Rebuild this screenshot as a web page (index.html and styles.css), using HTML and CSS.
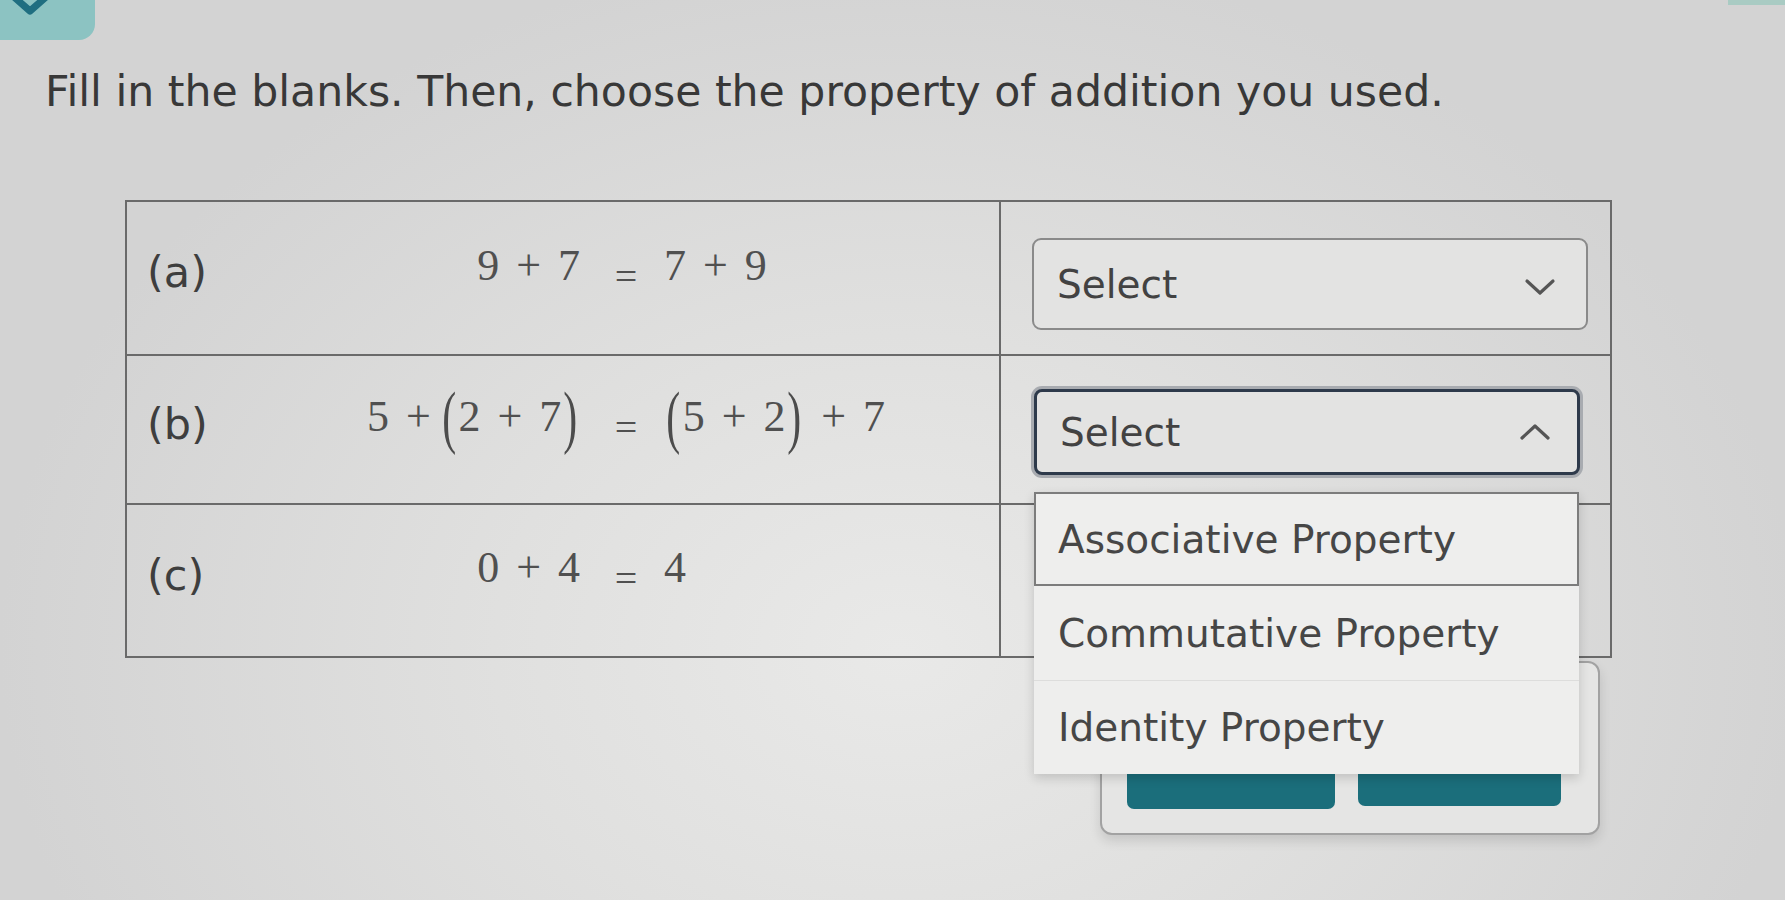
FILE: index.html
```html
<!DOCTYPE html>
<html lang="en">
<head>
<meta charset="utf-8">
<title>Properties of addition</title>
<link rel="stylesheet" href="styles.css">
</head>
<body>
<div class="page">
  <div class="topbar">
    <div class="tab">
      <svg class="tab-chevron" width="60" height="16" viewBox="0 0 60 16"><path d="M14 -3 L30 11 L46 -3" fill="none" stroke="#1f6e80" stroke-width="7" stroke-linejoin="round"/></svg>
    </div>
    <div class="strip"></div>
  </div>

  <h1 class="prompt">Fill in the blanks. Then, choose the property of addition you used.</h1>

  <div class="table">
    <div class="row row-a">
      <div class="expr-cell">
        <span class="label">(a)</span>
        <span class="lhs"><span class="n">9</span><span class="op">+</span><span class="n">7</span></span>
        <span class="eq">=</span>
        <span class="rhs"><span class="n">7</span><span class="op">+</span><span class="n">9</span></span>
      </div>
      <div class="select-cell">
        <div class="select">
          <span class="select-text">Select</span>
          <svg class="chev" width="32" height="18" viewBox="0 0 32 18"><path d="M3 3 L16 15 L29 3" fill="none" stroke="#555" stroke-width="3.2" stroke-linecap="round" stroke-linejoin="round"/></svg>
        </div>
      </div>
    </div>

    <div class="row row-b">
      <div class="expr-cell">
        <span class="label">(b)</span>
        <span class="lhs"><span class="n">5</span><span class="op op-tight">+</span><span class="paren">(</span><span class="n">2</span><span class="op">+</span><span class="n">7</span><span class="paren">)</span></span>
        <span class="eq">=</span>
        <span class="rhs"><span class="paren">(</span><span class="n">5</span><span class="op">+</span><span class="n">2</span><span class="paren">)</span><span class="op">+</span><span class="n">7</span></span>
      </div>
      <div class="select-cell">
        <div class="select select-open">
          <span class="select-text">Select</span>
          <svg class="chev" width="32" height="18" viewBox="0 0 32 18"><path d="M3 15 L16 3 L29 15" fill="none" stroke="#555" stroke-width="3.2" stroke-linecap="round" stroke-linejoin="round"/></svg>
          <ul class="menu">
            <li class="option option-hover">Associative Property</li>
            <li class="option">Commutative Property</li>
            <li class="option">Identity Property</li>
          </ul>
        </div>
      </div>
    </div>

    <div class="row row-c">
      <div class="expr-cell">
        <span class="label">(c)</span>
        <span class="lhs"><span class="n">0</span><span class="op">+</span><span class="n">4</span></span>
        <span class="eq">=</span>
        <span class="rhs"><span class="n">4</span></span>
      </div>
      <div class="select-cell"></div>
    </div>
  </div>

  <div class="actions">
    <button class="btn btn-1" type="button"></button>
    <button class="btn btn-2" type="button"></button>
  </div>
</div>
</body>
</html>
```

FILE: styles.css
```css
* { box-sizing: border-box; }

html, body {
  margin: 0;
  padding: 0;
}

body {
  width: 1785px;
  height: 900px;
  overflow: hidden;
  background:
    radial-gradient(ellipse 900px 700px at 900px 650px, #e9e9e8 0%, #e0e0df 45%, #d3d3d3 100%);
  font-family: "DejaVu Sans", "Verdana", sans-serif;
  color: #444;
}

.page {
  width: 1785px;
  height: 900px;
}

.topbar {
  height: 40px;
  display: flex;
  justify-content: space-between;
  align-items: flex-start;
}

.tab {
  width: 95px;
  height: 40px;
  background: #8cc3c2;
  border-bottom-right-radius: 16px;
  overflow: hidden;
}

.tab-chevron { display: block; }

.strip {
  width: 57px;
  height: 5px;
  background: #a9cbc3;
}

.prompt {
  margin: 26px 0 0 45px;
  font-size: 42.6px;
  line-height: 50px;
  font-weight: normal;
  color: #383838;
  white-space: nowrap;
}

.table {
  margin: 84px 0 0 125px;
  width: 1487px;
  border: 2px solid #6a6a6a;
}

.row {
  display: grid;
  grid-template-columns: 874px 1fr;
  border-bottom: 2px solid #6a6a6a;
}

.row:last-child { border-bottom: none; }

.row-a { height: 154px; }
.row-b { height: 149px; }
.row-c { height: 151px; }

.expr-cell {
  border-right: 2px solid #6a6a6a;
  display: grid;
  grid-template-columns: 150px 303px 84px 1fr;
  align-items: center;
  padding-bottom: 12px;
}

.label {
  padding-left: 20px;
  font-size: 43px;
  color: #3e3e3e;
}

.lhs, .rhs {
  display: flex;
  align-items: center;
  font-family: "Liberation Serif", "Times New Roman", serif;
  font-size: 44px;
  color: #505050;
  margin-bottom: 14px;
}

.lhs { justify-content: flex-end; }
.rhs { justify-content: flex-start; }

.op { margin: 0 17px; }
.op-tight { margin-right: 9px; }

.paren {
  display: inline-block;
  transform: scale(0.95, 1.6);
  margin: 0 2px;
  color: #4c4c4c;
}

.eq {
  font-family: "Liberation Serif", "Times New Roman", serif;
  font-size: 40px;
  color: #505050;
  padding-left: 8px;
  text-align: center;
  margin-top: 8px;
}

.select-cell {
  position: relative;
  padding: 36px 22px 0 31px;
}

.row-b .select-cell { padding: 33px 30px 0 33px; }

.select {
  position: relative;
  height: 92px;
  border: 2px solid #8a8a8a;
  border-radius: 9px;
  background: #e3e3e2;
  display: flex;
  align-items: center;
  justify-content: space-between;
  padding: 0 30px 0 23px;
}

.select-text {
  font-size: 39px;
  color: #424242;
}

.chev { margin-top: 6px; }

.select-open {
  height: 86px;
  border: 3px solid #2e3a4b;
  border-radius: 8px;
  box-shadow: 0 0 0 3px #a8abb0;
  padding-right: 26px;
}

.select-open .chev { margin-top: 0; }

.menu {
  position: absolute;
  left: -3px;
  top: calc(100% + 20px);
  width: 545px;
  margin: 0;
  padding: 0;
  list-style: none;
  background: #eeeeed;
  box-shadow: 0 4px 10px rgba(0, 0, 0, 0.16);
  z-index: 5;
}

.option {
  height: 94px;
  display: flex;
  align-items: center;
  padding-left: 24px;
  font-size: 39px;
  color: #464646;
  white-space: nowrap;
}

.option + .option { border-top: 1px solid #dddddc; }

.option-hover {
  border: 2px solid #7c7c7c;
  padding-left: 22px;
}

.option-hover + .option { border-top: none; }

.actions {
  margin: 3px 0 0 1100px;
  width: 500px;
  height: 174px;
  border: 2px solid #a2a2a2;
  border-radius: 12px;
  background: #e5e5e4;
  box-shadow: 0 6px 12px rgba(0, 0, 0, 0.12);
  display: flex;
  align-items: flex-end;
  gap: 23px;
  padding: 0 37px 24px 25px;
}

.btn {
  border: none;
  height: 46px;
  border-radius: 7px;
  background: #1b6e7b;
  padding: 0;
}

.btn-1 { width: 208px; }
.btn-2 { width: 203px; margin-bottom: 3px; }
```
